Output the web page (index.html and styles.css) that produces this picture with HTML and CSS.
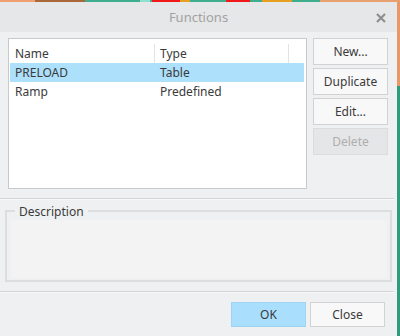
FILE: index.html
```html
<!DOCTYPE html>
<html lang="en">

<head>
	<meta charset="UTF-8">
	<title>Functions</title>
	<link rel="stylesheet" href="styles.css">
</head>

<body>
	<div class="desk">
		<div class="dialog">
			<div class="titlebar">
				<span class="title">Functions</span>
				<svg class="close" width="10" height="10" viewBox="0 0 10 10">
					<path d="M1 1 L9 9 M9 1 L1 9" stroke="#8e8e8e" stroke-width="2.2" />
				</svg>
			</div>
			<div class="top">
				<div class="list">
					<div class="row head">
						<div class="col-name">Name</div>
						<div class="col-type">Type</div>
						<div class="col-rest"></div>
					</div>
					<div class="row selected">
						<div class="col-name">PRELOAD</div>
						<div class="col-type">Table</div>
					</div>
					<div class="row">
						<div class="col-name">Ramp</div>
						<div class="col-type">Predefined</div>
					</div>
				</div>
				<div class="actions">
					<div class="btn">New...</div>
					<div class="btn">Duplicate</div>
					<div class="btn">Edit...</div>
					<div class="btn disabled">Delete</div>
				</div>
			</div>
			<div class="sep"></div>
			<div class="group">
				<div class="legend">Description</div>
				<div class="group-body"></div>
			</div>
			<div class="sep"></div>
			<div class="footer">
				<div class="btn primary">OK</div>
				<div class="btn">Close</div>
			</div>
		</div>
	</div>
</body>

</html>
```

FILE: styles.css
```css
* {
	margin: 0;
	padding: 0;
	box-sizing: border-box;
}

body {
	font-family: 'Noto Sans', 'Open Sans', sans-serif;
	font-size: 12px;
	color: #3a3a3a;
	width: 400px;
	height: 336px;
	overflow: hidden;
}

.desk {
	height: 336px;
	padding: 2px 3px 0 0;
	background:
		linear-gradient(to right, #f0a070 0 35px, #a86838 35px 85px, #3fae8e 85px 140px, #8fe0cc 140px 150px, #3fae8e 150px 152px, #f01818 152px 180px, #e8a020 180px 190px, #3fae8e 190px 226px, #f01818 226px 250px, #3fae8e 250px 262px, #e8a020 262px 292px, #3fae8e 292px 320px, #e8a070 320px) top / 100% 2px no-repeat,
		linear-gradient(to bottom, #e89868 0 86px, #2f9a7c 86px);
}

.dialog {
	height: 100%;
	background-color: #eff0f1;
	display: flex;
	flex-direction: column;
}

.titlebar {
	height: 30px;
	background-color: #e6e7e8;
	display: flex;
	align-items: center;
	justify-content: center;
	position: relative;
}

.title {
	font-size: 13px;
	color: #a2a2a2;
}

.titlebar .close {
	position: absolute;
	right: 11px;
	top: 11px;
}

.top {
	display: flex;
	padding: 6px 9px 0 8px;
	gap: 6px;
}

.list {
	width: 299px;
	height: 151px;
	background-color: white;
	border: 1px solid #c9c9c9;
	padding: 0 2px 0 1px;
}

.row {
	display: flex;
	height: 19px;
	align-items: center;
}

.row.head {
	height: 24px;
	padding-top: 5px;
	align-items: center;
}

.row.selected {
	background-color: #ade0fb;
}

.col-name {
	width: 145px;
	padding-left: 5px;
	height: 100%;
	display: flex;
	align-items: center;
}

.col-type {
	width: 134px;
	padding-left: 5px;
	height: 100%;
	display: flex;
	align-items: center;
}

.head .col-name,
.head .col-type {
	border-right: 1px solid #e3e3e3;
}

.actions {
	display: flex;
	flex-direction: column;
	gap: 3px;
}

.btn {
	width: 75px;
	height: 27px;
	background-color: #f8f8f8;
	border: 1px solid #d2d2d2;
	display: flex;
	align-items: center;
	justify-content: center;
	color: #3a3a3a;
}

.btn.disabled {
	background-color: #e5e6e7;
	border-color: #dcdcdc;
	color: #aeaeae;
}

.sep {
	height: 2px;
	margin: 9px 3px 0 0;
	border-top: 1px solid #d3d4d5;
	border-bottom: 1px solid #f8f8f8;
}

.group {
	margin: 10px 5px 0 5px;
	height: 72px;
	border: 2px solid #dcdddf;
	position: relative;
	padding: 8px 3px 2px 4px;
}

.legend {
	position: absolute;
	top: -9px;
	left: 8px;
	padding: 0 4px;
	background-color: #eff0f1;
	font-size: 12px;
}

.group-body {
	height: 100%;
	background-color: #f3f3f4;
}

.footer {
	display: flex;
	justify-content: flex-end;
	gap: 4px;
	padding: 9px 12px 0 0;
}

.footer .btn {
	width: 75px;
	height: 25px;
}

.btn.primary {
	background-color: #a9dffc;
	border-color: #9ed4f2;
}
```
